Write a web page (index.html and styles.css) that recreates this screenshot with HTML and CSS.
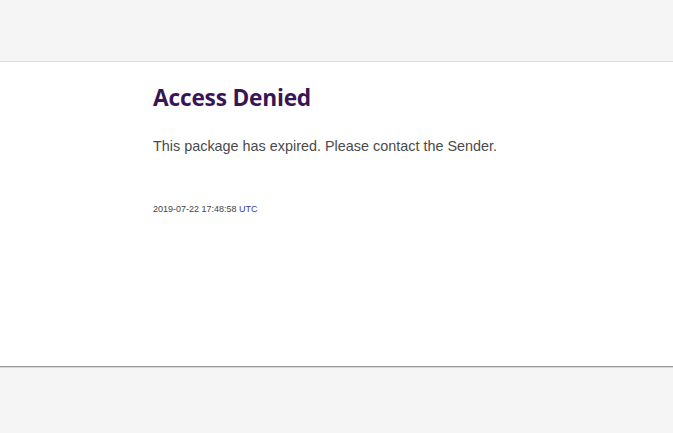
FILE: index.html
```html
<!DOCTYPE html>
<html>
<head>
<meta charset="utf-8">
<link rel="stylesheet" href="styles.css">
</head>
<body>
<div class="top"></div>
<main class="panel">
  <div class="content">
    <h1 class="title">Access Denied</h1>
    <p class="message">This package has expired. Please contact the Sender.</p>
    <p class="stamp">2019-07-22 17:48:58 <span class="tz">UTC</span></p>
  </div>
</main>
<div class="bottom"></div>
</body>
</html>
```
FILE: styles.css
```css
html, body {
  margin: 0;
  padding: 0;
  background: #f5f5f5;
  height: 100%;
}
.top {
  height: 61px;
  background: #f5f5f5;
  border-bottom: 1px solid #dcdcdc;
}
.panel {
  background: #fff;
  height: 304px;
  border-bottom: 1px solid #999;
  box-shadow: 0 1px 0 #d8d8d8;
}
.content {
  padding: 21px 0 0 153px;
}
.title {
  margin: 0;
  font-family: "Open Sans", "Noto Sans", sans-serif;
  font-weight: 700;
  font-size: 22.7px;
  line-height: 30px;
  color: #3a1556;
  letter-spacing: -0.2px;
}
.message {
  margin: 24px 0 0;
  font-family: "Liberation Sans", Arial, sans-serif;
  font-size: 14.4px;
  line-height: 18px;
  color: #4a4a4a;
}
.stamp {
  margin: 48px 0 0;
  font-family: "Liberation Sans", Arial, sans-serif;
  font-size: 9px;
  line-height: 12px;
  color: #444;
}
.tz {
  color: #3b3ba0;
}
```
